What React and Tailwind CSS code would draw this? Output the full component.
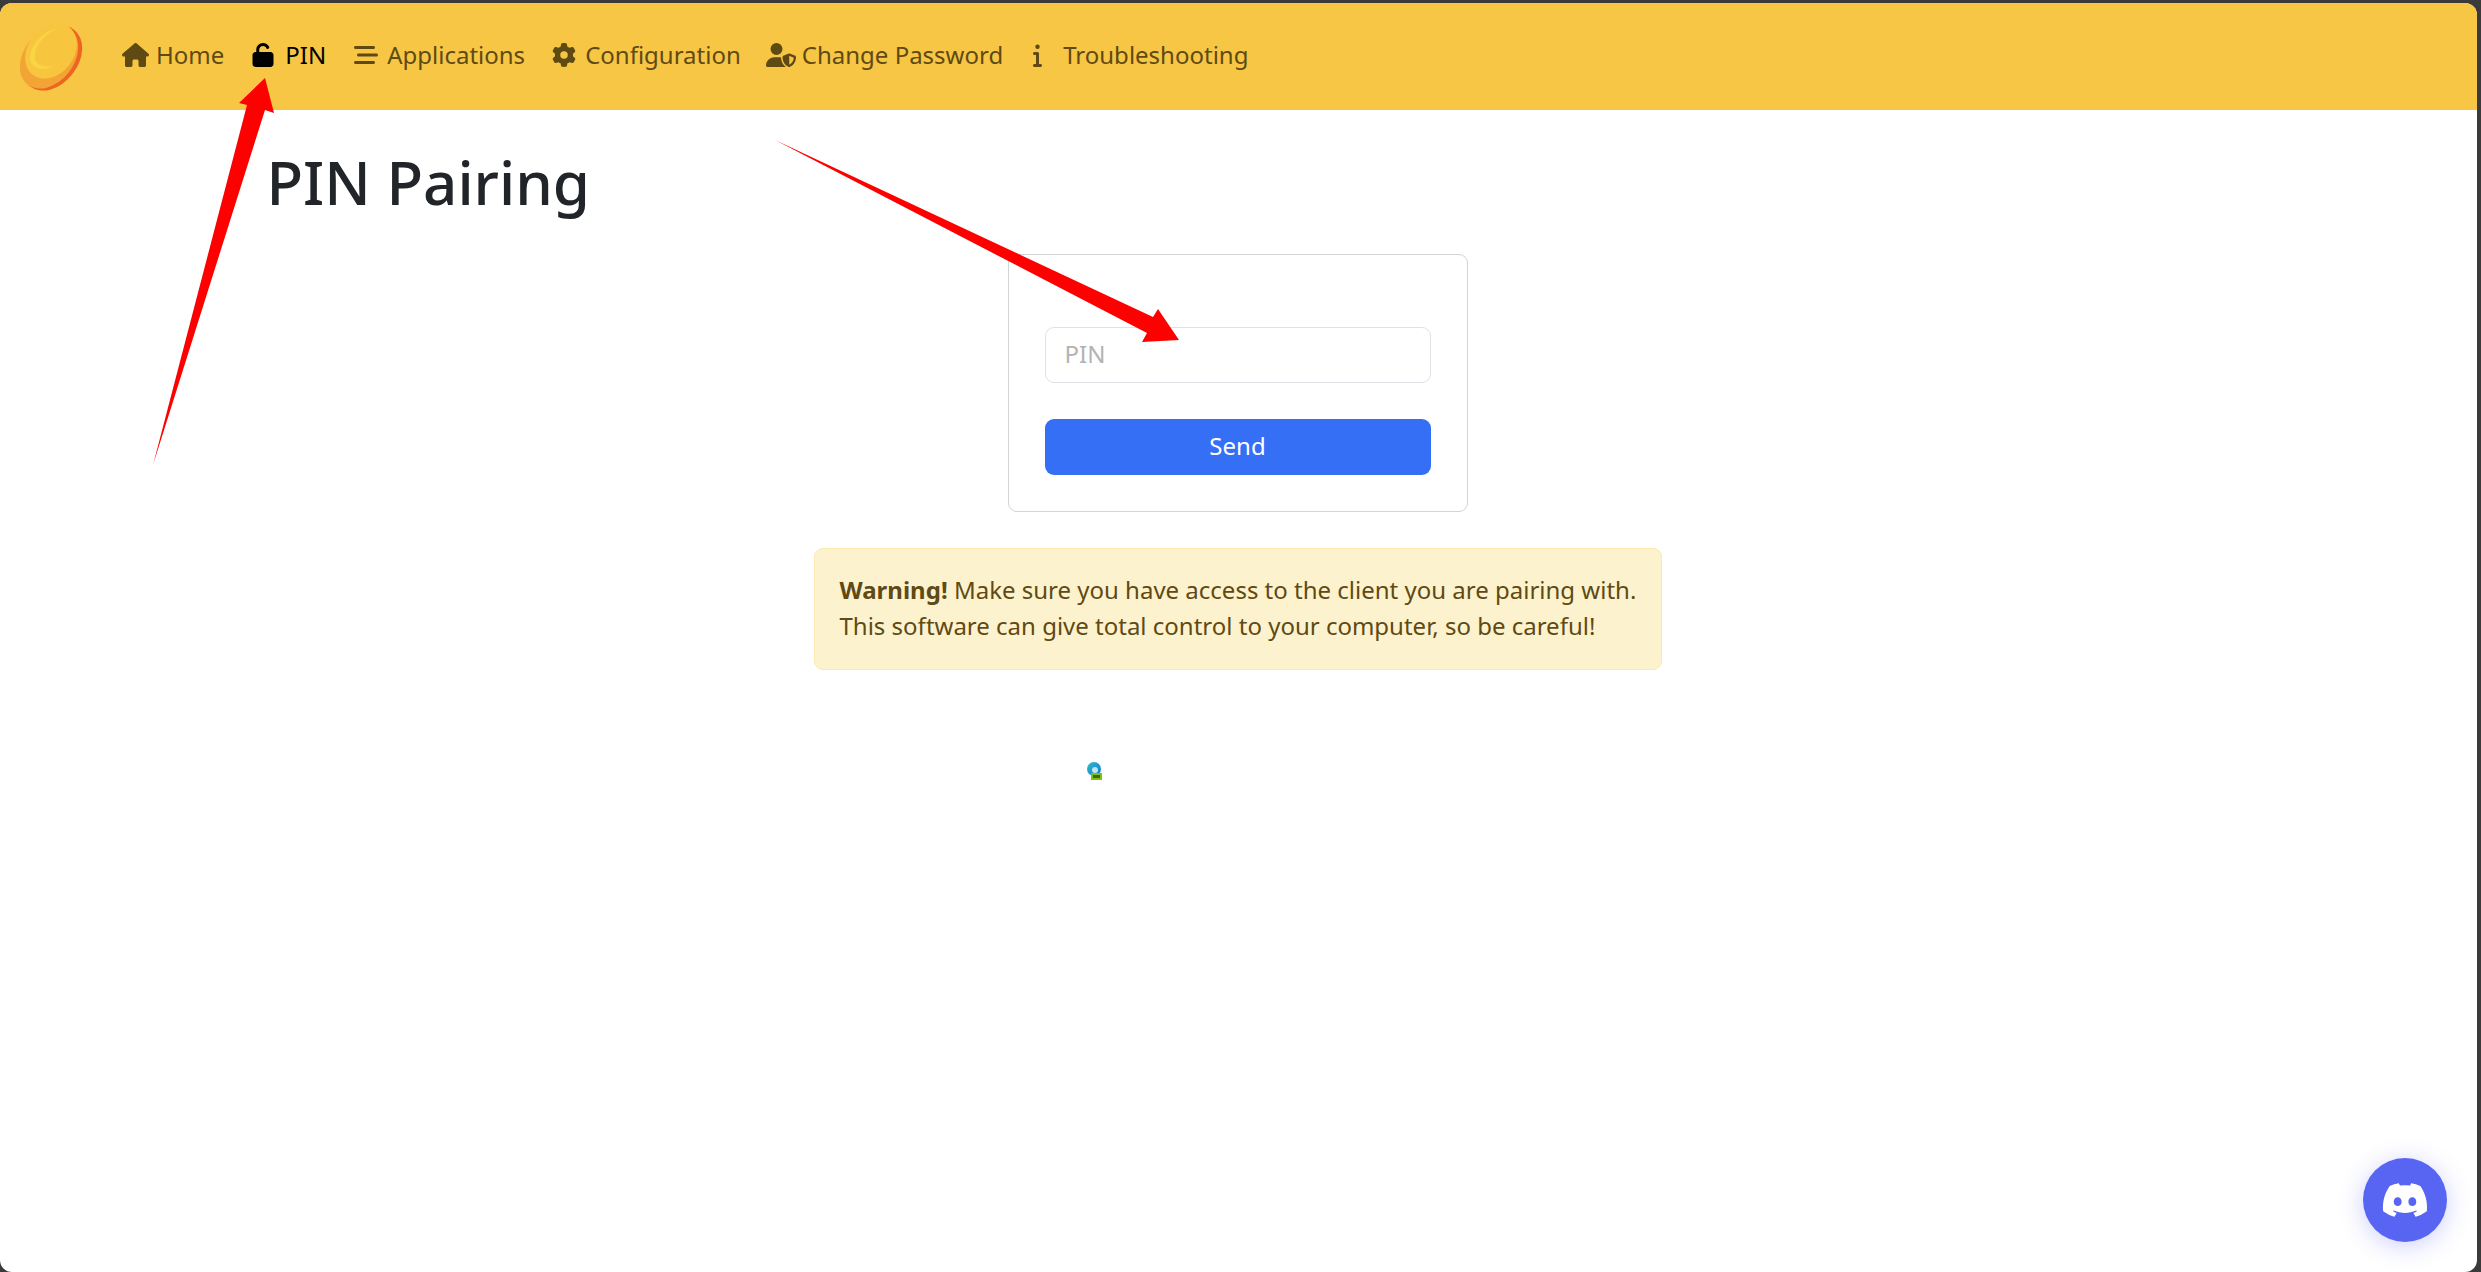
import React from "react";
import { FaHouse, FaUnlock, FaGear, FaUserShield, FaInfo, FaDiscord, FaBarsStaggered } from "react-icons/fa6";

function NavItem({ icon, label, active, className }) {
  return (
    <a className={"flex -translate-y-[2px] items-center whitespace-nowrap " + (active ? "text-black " : "text-[#5f4a13] ") + className}>
      {icon}
      <span>{label}</span>
    </a>
  );
}

function Logo() {
  return (
    <svg width="68" height="70" viewBox="0 0 68 70" className="shrink-0">
      <ellipse cx="36" cy="36" rx="36" ry="26" transform="rotate(-52 36 36)" fill="#ee6420" />
      <ellipse cx="33" cy="35" rx="35" ry="25" transform="rotate(-52 33 35)" fill="#f2a535" />
      <ellipse cx="35" cy="29" rx="30" ry="23" transform="rotate(-52 35 29)" fill="#f8c53e" />
      <path d="M14 37 C14 24 26 9 42 6 C28 12 18 24 19 37 C20 42 26 46 38 44 C26 50 15 46 14 37 Z" fill="#f9d443" />
    </svg>
  );
}

function TinyIcon() {
  return (
    <svg width="16" height="20" viewBox="0 0 16 20" className="shrink-0">
      <defs>
        <linearGradient id="edge" x1="0" y1="0" x2="1" y2="1">
          <stop offset="0" stopColor="#2fc0c8" />
          <stop offset="1" stopColor="#1273d6" />
        </linearGradient>
      </defs>
      <circle cx="7" cy="8" r="7" fill="url(#edge)" />
      <circle cx="8" cy="9" r="3" fill="#bfe6f0" />
      <rect x="4" y="12" width="11" height="7" fill="#7fbe12" />
      <rect x="6" y="14" width="7" height="3" fill="#3c6a10" />
    </svg>
  );
}

export default function App() {
  return (
    <div className="relative h-[1272px] w-full overflow-hidden bg-[#3a3a3a] pt-[3px] pr-[4px] font-['Noto_Sans',sans-serif] text-[24px] leading-[36px]">
      <div className="flex h-full flex-col overflow-hidden rounded-[12px] bg-white">
        <nav className="flex h-[107px] shrink-0 items-center bg-[#f7c645] pl-[16px]">
          <Logo />
          <NavItem className="ml-[38px]" icon={<FaHouse className="mr-[7px] h-[24px] w-[27px]" />} label="Home" />
          <NavItem className="ml-[28px]" active icon={<FaUnlock className="mr-[11px] h-[24px] w-[22px]" />} label="PIN" />
          <NavItem className="ml-[28px]" icon={<FaBarsStaggered className="mr-[9px] h-[24px] w-[24px]" />} label="Applications" />
          <NavItem className="ml-[27px]" icon={<FaGear className="mr-[9px] h-[24px] w-[24px]" />} label="Configuration" />
          <NavItem className="ml-[25px]" icon={<FaUserShield className="mr-[6px] h-[24px] w-[30px]" />} label="Change Password" />
          <NavItem className="ml-[28px]" icon={<FaInfo className="mr-[19px] h-[24px] w-[13px]" />} label="Troubleshooting" />
        </nav>
        <main className="mx-auto flex w-[1980px] flex-col px-[18px]">
          <h1 className="mt-[36px] mb-[36px] text-[60px] leading-[72px] font-medium text-[#212529]">PIN Pairing</h1>
          <div className="mr-[2px] flex flex-col items-center">
            <form className="flex h-[258px] w-[460px] flex-col gap-[36px] rounded-[9px] border-[1.5px] border-[#d3d4d5] px-[36px] pt-[72px]">
              <div className="flex h-[56px] items-center rounded-[9px] border-[1.5px] border-[#dee2e6] pr-[18px] pb-[2px] pl-[19px] text-[#b3b3b3]">PIN</div>
              <button type="button" className="h-[56px] rounded-[9px] bg-[#346ff6] pb-[2px] text-center text-white">Send</button>
            </form>
            <div className="mt-[36px] w-[848px] rounded-[9px] border-[1.5px] border-[#fae9b0] bg-[#fdf2ce] pt-[23px] pr-[23px] pb-[25px] pl-[25px] text-[#5f4a13]">
              <b className="font-bold">Warning!</b> Make sure you have access to the client you are pairing with.
              <br />
              This software can give total control to your computer, so be careful!
            </div>
            <div className="mt-[91px] mr-[285px]"><TinyIcon /></div>
          </div>
        </main>
      </div>

      <a className="absolute top-[1158px] left-[2363px] flex h-[84px] w-[84px] items-center justify-center rounded-full bg-[#5865f2] text-white shadow-[0_4px_24px_rgba(88,101,242,0.3)]">
        <FaDiscord className="h-[48px] w-[48px]" />
      </a>

      <svg className="pointer-events-none absolute top-0 left-0" width="2481" height="1272">
        <polygon points="153,465 247,105 239,103 265,78 274,113 265,110" fill="#ff0000" />
        <polygon points="775,140 1153,317 1158,309 1179,340 1142,342 1147,333" fill="#ff0000" />
      </svg>
    </div>
  );
}
